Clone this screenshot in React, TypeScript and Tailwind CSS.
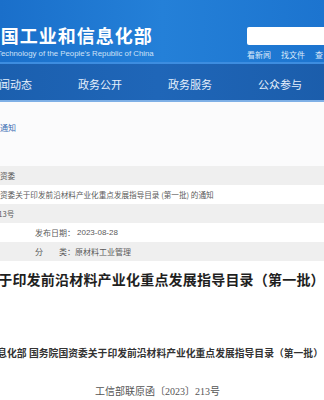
export default function App() {
  const rows = [
    { text: "资委", gray: true, ml: "ml-0" },
    { text: "资委关于印发前沿材料产业化重点发展指导目录 (第一批)  的通知", gray: false, ml: "ml-0" },
    { text: "213号", gray: true, ml: "ml-[-6px]" },
  ]
  return (
    <div className="w-[324px] h-[400px] overflow-hidden bg-white font-['Noto_Sans_CJK_SC',sans-serif]">
      {/* header */}
      <div className="h-[62px] flex justify-between bg-gradient-to-r from-[#1a6fca] via-[#2480d8] to-[#1c74cf]">
        <div className="flex flex-col items-end pt-[25px] ml-[-3px]">
          <div className="text-[18px] leading-[20px] font-bold tracking-[1px] text-white whitespace-nowrap">
            国工业和信息化部
          </div>
          <div className="text-[7.8px] leading-[9px] mt-[4px] text-[#cfe2f7] whitespace-nowrap font-['Liberation_Sans',sans-serif] mr-[-1px]">
            Technology of the People's Republic of China
          </div>
        </div>
        <div className="w-[77px] pt-[27px] flex flex-col">
          <div className="h-[18px] bg-white rounded-l-[2px]" />
          <div className="flex gap-[10px] mt-[5px] text-[8px] leading-[10px] text-[#dbe9fa] whitespace-nowrap">
            <span>看新闻</span>
            <span>找文件</span>
            <span>查</span>
          </div>
        </div>
      </div>
      {/* nav */}
      <div className="h-[2px] bg-[#3d8de0]" />
      <div className="h-[36px] bg-gradient-to-r from-[#1b5fae] via-[#1f66b8] to-[#1b5dab] flex items-center gap-[46px] ml-[-12px] text-[11px] text-[#e6f0fc] whitespace-nowrap pt-[5px] w-[340px]">
        <span>新闻动态</span>
        <span>政务公开</span>
        <span>政务服务</span>
        <span>公众参与</span>
      </div>
      <div className="h-[2px] bg-[#7fb0e6] w-[340px]" />
      {/* breadcrumb */}
      <div className="h-[64px] bg-[#fbfbfc] flex items-start pt-[21px]">
        <span className="text-[8px] leading-[10px] text-[#3a6db3]">通知</span>
      </div>
      {/* info table */}
      <div className="flex flex-col text-[7.6px] text-[#5a5a5a] whitespace-nowrap">
        {rows.map((r, i) => (
          <div key={i} className={`h-[19px] flex items-center ${r.gray ? "bg-[#efefef]" : "bg-white"}`}>
            <span className={r.ml}>{r.text}</span>
          </div>
        ))}
        <div className="h-[19px] flex items-center bg-white pl-[35px] text-[8px]">
          <span>发布日期：</span>
          <span className="ml-[2px] font-['Liberation_Sans',sans-serif]">2023-08-28</span>
        </div>
        <div className="h-[19px] flex items-center bg-[#efefef] pl-[35px] text-[8px]">
          <span>分　　类：原材料工业管理</span>
        </div>
      </div>
      {/* title */}
      <div className="h-[36px] flex items-center whitespace-nowrap">
        <span className="ml-[-16px] text-[14px] tracking-[0.2px] font-bold text-[#1f1f1f]">关于印发前沿材料产业化重点发展指导目录（第一批）</span>
      </div>
      {/* document */}
      <div className="h-[50px]" />
      <div className="whitespace-nowrap text-[9.8px] leading-[14px] font-semibold text-[#333] font-['Liberation_Serif','Noto_Sans_CJK_SC',serif]">
        <span className="ml-[-42px] inline-block">工业和信息化部 国务院国资委关于印发前沿材料产业化重点发展指导目录（第一批）</span>
      </div>
      <div className="h-[24px]" />
      <div className="pl-[95px] whitespace-nowrap text-[10px] leading-[14px] text-[#555] font-['Liberation_Serif','Noto_Sans_CJK_SC',serif]">
        工信部联原函〔2023〕213号
      </div>
    </div>
  )
}
